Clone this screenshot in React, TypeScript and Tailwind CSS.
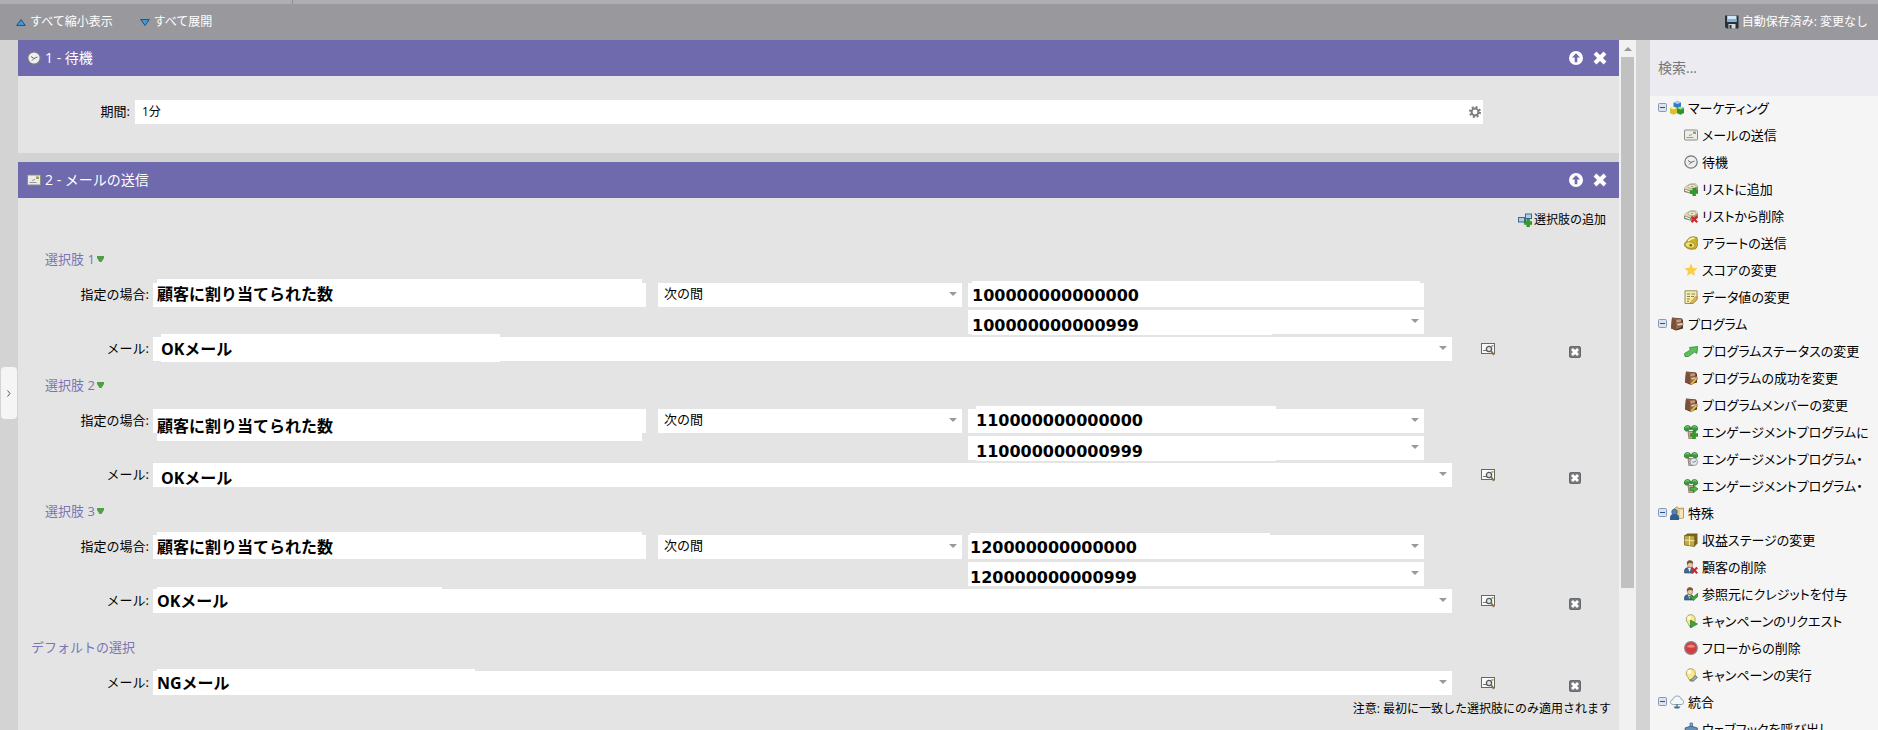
import { ReactNode } from "react";

// ---- icons (14x14 grid) ----

function Icon({ children, className = "size-[14px]" }: { children: ReactNode; className?: string }) {
  return (
    <svg viewBox="0 0 14 14" className={`${className} shrink-0`} aria-hidden="true">
      {children}
    </svg>
  );
}

const plus = <path d="M8.800 6h2.800v2.600H14v2.800h-2.400V14H8.800v-2.600H6.300V8.600h2.500z" fill="#2f9e2a" stroke="#1c6d1a" strokeWidth=".4" />;
const cross = <path d="M7.500 7.500l5.700 5.700M13.200 7.500l-5.700 5.700" stroke="#cf2730" strokeWidth="2.200" />;
const pencil = (
  <>
    <path d="M6.500 12.500l5.200-6 1.800 1.500-5.200 5.500-2.300.5z" fill="#efc04a" stroke="#8d6a1e" strokeWidth=".6" />
    <path d="M11.700 6.500l1-1 1.300 1.300-1 1.200z" fill="#d98a7a" />
  </>
);

const drive = (
  <>
    <path d="M0 6.500C1 4.500 4 2 7 1.500h5l2 3v4.500L8 12 0 10z" fill="#8a8874" />
    <path d="M0 6.500C1 4.500 4 2 7 1.500h5l2 2.500-6 5z" fill="#d9d6b8" />
    <ellipse cx="8" cy="4.500" rx="4" ry="2.200" fill="#f4f0cf" stroke="#9c9572" strokeWidth=".7" />
    <ellipse cx="8" cy="4.500" rx="1.300" ry=".7" fill="#a59b70" />
    <path d="M1 8l5 2" stroke="#f7f7ee" strokeWidth="1.200" />
  </>
);

const book = (
  <>
    <path d="M2 .5l10 1 1 2v8l-7 2-5-2z" fill="#4f3222" />
    <path d="M2 1L11.500 2v8L6 12.500 1.500 11z" fill="#9a6b4e" />
    <path d="M2 1L6 3v9.500L1.500 11z" fill="#7a5039" />
    <path d="M6.500 3l4.500-.5v2l-4.500.8z" fill="#c79a7c" />
    <path d="M7 6.500l6-.8v2.600L7 9z" fill="#e0d3c2" stroke="#5f412d" strokeWidth=".5" />
  </>
);

const plant = (
  <>
    <path d="M4 6.500h6L9 14H5z" fill="#cfae95" stroke="#7d5d48" strokeWidth=".7" />
    <path d="M7 4.500C5.500 4 5 4.800 4.500 5.800 2.500 6.800.3 5.800 0 3.500.3 1 3.500-.3 5.800 1.300 6.500 1.800 7 2.800 7 4.500z" fill="#3a9a3a" stroke="#1d6524" strokeWidth=".6" />
    <path d="M7 4.500c1.500-.5 2 .3 2.500 1.300 2 1 4.200 0 4.500-2.300C13.700 1 10.500-.3 8.200 1.300 7.500 1.800 7 2.800 7 4.500z" fill="#3a9a3a" stroke="#1d6524" strokeWidth=".6" />
    <path d="M1.500 2.500c1-1 2.500-1 3.500-.3M8.800 2.200c1-.8 2.500-.7 3.700.3" stroke="#9be08a" strokeWidth="1" fill="none" />
  </>
);

const person = (
  <>
    <path d="M.5 13V10.500C.5 8.500 2.500 7.500 5 7.500S9.500 8.500 9.500 10.500V13z" fill="#3c6a92" stroke="#26435f" strokeWidth=".6" />
    <path d="M4 8l1.500 4L7 8z" fill="#eef2f5" />
    <ellipse cx="6" cy="4.500" rx="2.700" ry="3.200" fill="#e9c49e" stroke="#8b6a4a" strokeWidth=".5" />
    <path d="M3.100 5C2.300 1.500 4 .3 6 .3s3.600 1.200 3 3.500C7.500 2.800 4.300 2.500 3.100 5z" fill="#77573a" />
  </>
);

const bulb = (
  <>
    <path d="M6.500.5a5 5 0 0 1 3.200 8.700L9 11.500H5L4 9.300A5 5 0 0 1 6.500.5z" fill="#f7ea87" stroke="#a2985a" strokeWidth=".8" />
    <circle cx="5.200" cy="3.900" r="2" fill="#fffee6" />
    <path d="M5 11.300h4l-.6 2.200H5.600z" fill="#9a9a9a" />
  </>
);

const icons: Record<string, ReactNode> = {
  clock: (
    <>
      <circle cx="7" cy="7" r="6.200" fill="#eceeef" stroke="#75787b" strokeWidth="1.200" />
      <path d="M7 7.500L10.500 6M7 7.500L4 5.500M7 7.500L5 9.500" stroke="#5b5e61" strokeWidth=".9" fill="none" />
    </>
  ),
  mail: (
    <>
      <rect x=".5" y="2" width="13" height="10" rx=".8" fill="#ecece8" stroke="#8b8b88" />
      <path d="M2.500 9.500h7M5 7.500l3-1" stroke="#8c8f92" strokeWidth=".9" />
      <rect x="9" y="3.500" width="3" height="2.500" fill="#97a254" />
    </>
  ),
  blocks: (
    <>
      <path d="M3.500 1.500L7.500 0 11 1.500v5L7.500 8.500 3.500 6.500z" fill="#2f7cc4" />
      <path d="M3.500 1.500L7.500 0 11 1.500 7.500 3z" fill="#a9d3f3" />
      <path d="M0 7l3.500-1.500L7 7v5l-3.500 1.800L0 12.300z" fill="#d9be33" />
      <path d="M0 7l3.500-1.500L7 7 3.500 8.500z" fill="#f9f0a3" />
      <path d="M7 7l3.500-1.500L14 7v5l-3.500 1.800L7 12.300z" fill="#2f962c" />
      <path d="M7 7l3.500-1.500L14 7l-3.500 1.500z" fill="#a7e49a" />
    </>
  ),
  listAdd: <>{drive}{plus}</>,
  listRemove: <>{drive}{cross}</>,
  bell: (
    <>
      <path d="M3 4.500C5 1 8.500.500 11 1l2 .5c1 3-.2 5 .5 8L12 12.500C8 14.500 1 12.500.5 9 .3 7 2 6 3 4.500z" fill="#cbb02b" stroke="#80701a" strokeWidth=".7" />
      <path d="M4.300 5.500C5.500 3 8 2 10.500 2.300" stroke="#fff6ae" strokeWidth="1.600" fill="none" />
      <ellipse cx="6" cy="9" rx="5" ry="3" transform="rotate(12 6 9)" fill="#f0e070" stroke="#988523" strokeWidth=".6" />
      <circle cx="6.800" cy="9.300" r="1.300" fill="#6e5d15" />
    </>
  ),
  star: <path d="M7 .5l1.900 4.400 4.700.4-3.600 3.100 1.100 4.700L7 10.600l-4.100 2.500L4 8.400.4 5.300l4.700-.4z" fill="#fbce45" />,
  note: (
    <>
      <path d="M1 .8h12v9L9 13.500H1z" fill="#f4edac" stroke="#8d8753" strokeWidth=".9" />
      <path d="M3 4h3M7.500 4H11M3 6.500h3M7 6.500h3M3 9h3M3 11.300h2" stroke="#85815e" strokeWidth="1" />
      {pencil}
    </>
  ),
  book,
  arrow: <path d="M.5 9.500L6.500 6 5.500 3.500l8.300-1-1 7-2.300-1.500L4.500 12.500H1z" fill="#5cc258" stroke="#2c8a33" strokeWidth=".8" />,
  bookEdit: <>{book}{pencil}</>,
  plantAdd: <>{plant}{plus}</>,
  plantClock: (
    <>
      {plant}
      <circle cx="9.800" cy="9.800" r="3.700" fill="#e6ebf0" stroke="#7d8894" strokeWidth=".8" />
      <path d="M12 8.800L10 10.300l-1.500-.6" stroke="#59636d" strokeWidth=".8" fill="none" />
    </>
  ),
  plantMove: (
    <>
      {plant}
      <path d="M6 8.600h3.500V6.400L14 10l-4.500 3.600v-2.200H6z" fill="#4cb84a" stroke="#1d6b22" strokeWidth=".7" />
    </>
  ),
  special: (
    <>
      <path d="M4 3L7 .8l2 1.700 4.500-.5v10L6 13z" fill="#e7cb8d" stroke="#a88a4d" strokeWidth=".8" />
      <path d="M10 4l3-.5v8l-3 .8z" fill="#f6e5b8" />
      <path d="M0 11.500C0 9 1.500 8 4.500 8S9 9 9 11.500V14H0z" fill="#2c5f8d" />
      <circle cx="4.500" cy="6" r="2.800" fill="#4f86b4" stroke="#23496c" strokeWidth=".6" />
    </>
  ),
  cube: (
    <>
      <path d="M.5 2.500L3.500.6h10v9.900L10.500 13.500.5 12z" fill="#75631a" />
      <path d="M.5 2.500l10 .5v10.500L.5 12z" fill="#bfa94b" stroke="#6e5d13" strokeWidth=".6" />
      <path d="M.5 7l10 .8M5.500 3v9.500" stroke="#f7eda8" strokeWidth="1" />
    </>
  ),
  personRemove: <>{person}{cross}</>,
  personCredit: (
    <>
      {person}
      <path d="M5 9.500l2.500-1.200 1.500 2L14 6v3.300L9.500 13.500z" fill="#43a63c" stroke="#1e6a1f" strokeWidth=".6" />
    </>
  ),
  bulbRun: (
    <>
      {bulb}
      <path d="M6.500 6l7 4-7 3.800z" fill="#3fa33a" stroke="#1d6b22" strokeWidth=".6" />
    </>
  ),
  stop: (
    <>
      <circle cx="7" cy="7" r="6.300" fill="#d23f3e" stroke="#8b8080" strokeWidth="1.200" />
      <path d="M2.800 6C4 2.500 10 2.500 11.200 6 9 7 5 7 2.800 6z" fill="#e98581" />
    </>
  ),
  bulbTool: (
    <>
      {bulb}
      <path d="M6.500 12l5-4.500 2 2-4.500 4z" fill="#a4a7aa" stroke="#5d6164" strokeWidth=".7" />
    </>
  ),
  cloud: (
    <>
      <path d="M3.500 9.500C1 9.500 0 7.800.6 6.200 1 5 2 4.800 2.700 4.800 3 2.500 5 1 7.200 1c2.300 0 4 1.600 4.200 3.600 1.500.1 2.300 1.200 2.200 2.500 0 1.500-1.100 2.400-2.600 2.400z" fill="#f2f7fb" stroke="#8d99a4" strokeWidth=".9" />
      <path d="M7 9V12" stroke="#5d7285" strokeWidth="1.400" />
      <path d="M3.500 11.500h7L9 13.600H5z" fill="#3a7298" />
    </>
  ),
  hook: (
    <>
      <path d="M6 1h2.500v4H6z" fill="#86a8c6" stroke="#44688b" strokeWidth=".7" />
      <path d="M1 6l6-2 6.500 2-1 6H2z" fill="#6390b8" stroke="#33587b" strokeWidth=".8" />
    </>
  ),
  save: (
    <>
      <path d="M0 .5h13.500V13.500H1.500L0 12z" fill="#29323a" />
      <path d="M2.200.8h9.300v6H2.200z" fill="#cfe6f5" />
      <path d="M2.200 4h9.300v2.800H2.200z" fill="#7fb4d8" />
      <path d="M3.500 9h7v4.500h-7z" fill="#d5d8da" />
      <path d="M4.500 10h2v3.500h-2z" fill="#29323a" />
    </>
  ),
  addChoice: (
    <>
      <path d="M5 7h2.500M7.500 3.500v7" stroke="#4b6577" strokeWidth="1" />
      <rect x=".5" y="4.500" width="6" height="4.500" fill="#a6d2ec" stroke="#3c6a8b" />
      <rect x="7.500" y="1" width="6" height="4.500" fill="#a6d2ec" stroke="#3c6a8b" />
      {plus}
    </>
  ),
  preview: (
    <>
      <rect x=".5" y="1.500" width="13" height="10" fill="#fafafa" stroke="#66686a" />
      <path d="M2 8.500h3" stroke="#77797b" />
      <rect x="10.500" y="3" width="2" height="1.800" fill="#a0ab5a" />
      <circle cx="8" cy="7" r="2.600" fill="#dbe7ef" stroke="#55585a" strokeWidth="1.300" />
      <path d="M10 9l3 3.800" stroke="#96713f" strokeWidth="2" />
    </>
  ),
  remove: (
    <>
      <rect x=".5" y=".5" width="13" height="13" rx="2" fill="#777b7e" stroke="#54585b" />
      <path d="M3.500 3.500l7 7M10.500 3.500l-7 7" stroke="#fff" strokeWidth="3.300" />
    </>
  ),
  up: (
    <>
      <circle cx="7" cy="7" r="7" fill="#fff" />
      <path d="M7 2.300l4 4.300H8.300v4.600H5.700V6.600H3z" fill="#6f69ae" />
    </>
  ),
  close: <path d="M2 2l10 10M12 2L2 12" stroke="#fff" strokeWidth="4" />,
  gear: (
    <>
      <circle cx="7" cy="7" r="5.800" fill="none" stroke="#7b7d80" strokeWidth="2.400" strokeDasharray="2.280 2.280" />
      <circle cx="7" cy="7" r="4" fill="none" stroke="#7b7d80" strokeWidth="2.300" />
    </>
  ),
};

// ---- data ----

const conditions = [
  {
    cover: "left-1 right-1 -top-1 bottom-0",
    values: [
      { text: "100000000000000", cover: "left-1 right-1 -top-0.5 bottom-0", caret: false },
      { text: "100000000000999", cover: "left-1 w-[300px] top-1 -bottom-px", caret: true },
    ],
    mail: "OKメール",
    mailCover: "left-2 w-[339px] -top-[3px] -bottom-px",
  },
  {
    cover: "left-1 right-1 top-0 -bottom-2",
    values: [
      { text: "110000000000000", cover: "left-2 w-[300px] -top-[3px] bottom-0", caret: true },
      { text: "110000000000999", cover: "left-2 w-[300px] top-1 -bottom-px", caret: true },
    ],
    mail: "OKメール",
    mailCover: "left-2 w-[339px] top-1 bottom-0",
  },
  {
    cover: "left-1 right-1 -top-[3px] bottom-0",
    values: [
      { text: "120000000000000", cover: "left-0.5 w-[300px] -top-0.5 bottom-0", caret: true },
      { text: "120000000000999", cover: "left-0.5 w-[300px] top-1 bottom-0", caret: true },
    ],
    mail: "OKメール",
    mailCover: "left-1 w-[285px] -top-0.5 bottom-0",
  },
];

const palette = [
  {
    title: "マーケティング",
    icon: "blocks",
    items: [
      ["mail", "メールの送信"],
      ["clock", "待機"],
      ["listAdd", "リストに追加"],
      ["listRemove", "リストから削除"],
      ["bell", "アラートの送信"],
      ["star", "スコアの変更"],
      ["note", "データ値の変更"],
    ],
  },
  {
    title: "プログラム",
    icon: "book",
    items: [
      ["arrow", "プログラムステータスの変更"],
      ["bookEdit", "プログラムの成功を変更"],
      ["bookEdit", "プログラムメンバーの変更"],
      ["plantAdd", "エンゲージメントプログラムに"],
      ["plantClock", "エンゲージメントプログラム・"],
      ["plantMove", "エンゲージメントプログラム・"],
    ],
  },
  {
    title: "特殊",
    icon: "special",
    items: [
      ["cube", "収益ステージの変更"],
      ["personRemove", "顧客の削除"],
      ["personCredit", "参照元にクレジットを付与"],
      ["bulbRun", "キャンペーンのリクエスト"],
      ["stop", "フローからの削除"],
      ["bulbTool", "キャンペーンの実行"],
    ],
  },
  {
    title: "統合",
    icon: "cloud",
    items: [["hook", "ウェブフックを呼び出し"]],
  },
];

// ---- parts ----

function Caret() {
  return (
    <svg viewBox="0 0 8 4" className="pointer-events-none absolute right-[5px] top-[9px] h-1 w-2" aria-hidden="true">
      <path d="M0 0h8L4 4z" fill="#999" />
    </svg>
  );
}

function StepHeader({ icon, title }: { icon: string; title: string }) {
  return (
    <header className="flex h-9 items-center bg-[#6f69ae] pl-[9px] pr-3 text-white">
      <Icon>{icons[icon]}</Icon>
      <h2 className="ml-1 flex-1 text-sm">{title}</h2>
      <button aria-label="上へ移動" className="mr-2.5">
        <Icon>{icons.up}</Icon>
      </button>
      <button aria-label="閉じる">
        <Icon>{icons.close}</Icon>
      </button>
    </header>
  );
}

function MailRow({ id, value, cover }: { id: string; value: string; cover: string }) {
  return (
    <div className="flex h-6">
      <label htmlFor={id} className="w-[131px] shrink-0 text-right leading-[22px]">
        メール:
      </label>
      <div className="relative ml-1 flex-1 bg-white">
        <input id={id} defaultValue={value} className={`absolute max-w-full bg-white text-base leading-4 font-bold outline-none ${cover}`} />
        <Caret />
      </div>
      <div className="flex w-[167px] shrink-0 items-center pl-[29px]">
        <button aria-label="プレビュー">
          <Icon>{icons.preview}</Icon>
        </button>
        <button aria-label="削除" className="mb-[3px] ml-[74px] self-end">
          <Icon className="size-3">{icons.remove}</Icon>
        </button>
      </div>
    </div>
  );
}

function Choice({ index }: { index: number }) {
  const c = conditions[index];
  const id = `choice-${index + 1}`;

  return (
    <section className="pb-[13px]">
      <h3 className="flex h-6 items-center gap-0.5 pb-0.5 pl-[27px] text-[#7a75b5]">
        選択肢 {index + 1}
        <svg viewBox="0 0 7 6" className="h-1.5 w-[7px]" aria-hidden="true">
          <path d="M0 0h7v2L4.500 6h-2L0 2z" fill="#4f9f43" />
        </svg>
      </h3>

      <div className="mt-[11px] mb-[3px] flex pr-[195px]">
        <label htmlFor={`${id}-if`} className="w-[131px] shrink-0 text-right leading-[22px]">
          指定の場合:
        </label>
        <div className="relative ml-1 h-6 flex-[493] bg-white">
          <input
            id={`${id}-if`}
            defaultValue="顧客に割り当てられた数"
            className={`absolute w-auto bg-white text-base leading-4 font-bold outline-none ${c.cover}`}
          />
        </div>
        <div className="relative ml-3 h-6 flex-[304]">
          <select aria-label="演算子" className="h-6 w-full appearance-none bg-white pb-1 pl-1.5 outline-none">
            <option>次の間</option>
          </select>
          <Caret />
        </div>
        <div className="ml-1.5 flex flex-[456] flex-col gap-[3px]">
          {c.values.map((v) => (
            <div key={v.text} className="relative h-6 bg-white">
              <input
                aria-label="値"
                defaultValue={v.text}
                className={`absolute max-w-full bg-white pt-0.5 font-['DejaVu_Sans',sans-serif] text-base leading-4 font-bold outline-none ${v.cover}`}
              />
              {v.caret && <Caret />}
            </div>
          ))}
        </div>
      </div>

      <MailRow id={`${id}-mail`} value={c.mail} cover={c.mailCover} />
    </section>
  );
}

function Palette() {
  return (
    <aside className="flex w-[228px] shrink-0 flex-col overflow-hidden bg-[#f5f5f5]">
      <input
        type="search"
        aria-label="検索"
        placeholder="検索..."
        className="h-14 w-full shrink-0 bg-[#ebebf1] px-2 pb-0.5 text-sm outline-none placeholder:text-[#777]"
      />
      <ul className="whitespace-nowrap [font-feature-settings:'palt']">
        {palette.map((group) => (
          <li key={group.title}>
            <div className="flex h-[27px] items-center pb-1 pl-2">
              <button aria-label="折りたたむ" className="mr-[3px]">
                <svg viewBox="0 0 9 9" className="size-[9px]" aria-hidden="true">
                  <rect x=".5" y=".5" width="8" height="8" rx="1" fill="#dbe3ee" stroke="#8799b8" />
                  <path d="M2 4.500h5" stroke="#2f4f86" />
                </svg>
              </button>
              <Icon>{icons[group.icon]}</Icon>
              <span className="ml-1">{group.title}</span>
            </div>
            <ul>
              {group.items.map(([icon, label], i) => (
                <li key={i} className="flex h-[27px] items-center gap-1 pb-1 pl-[34px]">
                  <Icon>{icons[icon]}</Icon>
                  {label}
                </li>
              ))}
            </ul>
          </li>
        ))}
      </ul>
    </aside>
  );
}

export default function App() {
  return (
    <div className="flex h-screen flex-col overflow-hidden bg-[#d3d3d3] font-['Open_Sans','Noto_Sans_CJK_JP',sans-serif] text-[13px] leading-5 text-black">
      <div className="h-1 shrink-0 bg-[#adadb2]">
        <div className="h-1 w-[293px] border-r border-[#8f8f94]" />
      </div>

      {/* Toolbar */}
      <div className="flex h-9 shrink-0 items-center bg-[#99989d] pl-4 pr-2.5 text-xs text-white">
        <button className="flex items-center gap-1">
          <svg viewBox="0 0 10 7" className="h-[7px] w-2.5" aria-hidden="true">
            <path d="M5 .6L9.300 6.400H.7z" fill="#3f9bd8" stroke="#1f4f7c" strokeLinejoin="round" />
          </svg>
          すべて縮小表示
        </button>
        <button className="ml-[27px] flex items-center gap-1">
          <svg viewBox="0 0 10 7" className="h-[7px] w-2.5" aria-hidden="true">
            <path d="M5 6.400L.7.600h8.600z" fill="#3f9bd8" stroke="#1f4f7c" strokeLinejoin="round" />
          </svg>
          すべて展開
        </button>
        <div className="ml-auto flex items-center gap-[3px]">
          <Icon>{icons.save}</Icon>
          自動保存済み: 変更なし
        </div>
      </div>

      <div className="flex min-h-0 flex-1">
        {/* Collapsed left panel */}
        <div className="flex w-[18px] shrink-0 items-start pt-[327px]">
          <button aria-label="パネルを開く" className="mx-px flex h-[52px] w-4 items-center justify-center rounded-sm bg-[#f5f5f5]">
            <svg viewBox="0 0 4 7" className="h-[7px] w-1" fill="none" stroke="#555" aria-hidden="true">
              <path d="M.5.5l2.500 3-2.500 3" />
            </svg>
          </button>
        </div>

        <main className="flex min-w-0 flex-1 flex-col gap-[9px] overflow-hidden">
          <section className="bg-[#e4e4e4]">
            <StepHeader icon="clock" title="1 - 待機" />
            <div className="flex pt-6 pr-[136px] pb-[29px]">
              <label htmlFor="wait" className="w-[112px] shrink-0 text-right leading-[22px]">
                期間:
              </label>
              <div className="relative ml-[5px] flex-1">
                <input id="wait" defaultValue="1分" className="h-6 w-full bg-white pb-0.5 pl-[7px] text-xs outline-none" />
                <button aria-label="設定" className="absolute top-1.5 right-0.5">
                  <Icon className="size-3">{icons.gear}</Icon>
                </button>
              </div>
            </div>
          </section>

          <section className="flex-1 bg-[#e4e4e4]">
            <StepHeader icon="mail" title="2 - メールの送信" />
            <div className="mt-2.5 mb-4 flex justify-end pr-[13px]">
              <button className="flex h-6 items-center gap-0.5 text-xs">
                <Icon>{icons.addChoice}</Icon>
                選択肢の追加
              </button>
            </div>

            {conditions.map((_, i) => (
              <Choice key={i} index={i} />
            ))}

            <h3 className="mt-2.5 mb-[11px] h-6 pl-[13px] leading-[22px] text-[#7a75b5]">デフォルトの選択</h3>
            <MailRow id="default-mail" value="NGメール" cover="left-1 w-[318px] -top-0.5 bottom-0" />
            <p className="mt-0.5 pr-2 text-right text-xs leading-6">注意: 最初に一致した選択肢にのみ適用されます</p>
          </section>
        </main>

        {/* Scrollbar */}
        <div className="mr-3.5 flex w-[17px] shrink-0 flex-col items-center bg-[#f1f1f1]">
          <svg viewBox="0 0 8 4" className="mt-[7px] mb-1.5 h-1 w-2 shrink-0" aria-hidden="true">
            <path d="M0 4h8L4 0z" fill="#999" />
          </svg>
          <div className="h-[77%] w-[13px] bg-[#c1c1c1]" />
        </div>

        <Palette />
      </div>
    </div>
  );
}
